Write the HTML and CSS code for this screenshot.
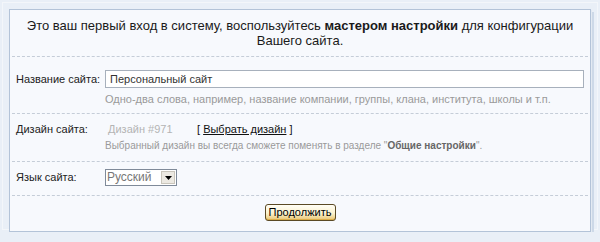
FILE: index.html
```html
<!DOCTYPE html>
<html lang="ru">
<head>
<meta charset="utf-8">
<title>Мастер настройки</title>
<link rel="stylesheet" href="styles.css">
</head>
<body>
<div class="page">
  <div class="panel">
    <div class="intro">Это ваш первый вход в систему, воспользуйтесь <b>мастером настройки</b> для конфигурации<br>Вашего сайта.</div>

    <div class="row row-name">
      <div class="label">Название сайта:</div>
      <div class="value">
        <input class="text-input" type="text" value="Персональный сайт">
        <div class="hint hint-name">Одно-два слова, например, название компании, группы, клана, института, школы и т.п.</div>
      </div>
    </div>

    <div class="row row-design">
      <div class="label">Дизайн сайта:</div>
      <div class="value">
        <div class="design-line"><span class="design-id">Дизайн #971</span><span class="choose">[ <a href="#">Выбрать дизайн</a> ]</span></div>
        <div class="hint">Выбранный дизайн вы всегда сможете поменять в разделе "<b>Общие настройки</b>".</div>
      </div>
    </div>

    <div class="row row-lang">
      <div class="label">Язык сайта:</div>
      <div class="value">
        <div class="select"><span class="select-text">Русский</span><span class="select-btn"><svg width="7" height="4" viewBox="0 0 7 4"><path d="M0 0h7L3.5 4z" fill="#000"/></svg></span></div>
      </div>
    </div>

    <div class="footer">
      <button class="btn" type="button">Продолжить</button>
    </div>
  </div>
</div>
</body>
</html>
```

FILE: styles.css
```css
html, body {
  margin: 0;
  padding: 0;
}
body {
  background: #e9eff7;
  font-family: "Liberation Sans", Arial, sans-serif;
  color: #222;
}
.page {
  margin: 2px;
  border: 1px solid #f3f6fa;
  padding: 6px 6px 6px 6px;
  height: 228px;
  box-sizing: border-box;
}
.panel {
  background: #f7f9fd;
  border: 1px solid #b3c3d8;
  box-shadow: 1px 1px 0 #e3eaf3, 3px 3px 0 #cdd9e8;
  padding: 0 2px;
  height: 223px;
  box-sizing: border-box;
}
.intro {
  text-align: center;
  font-size: 13px;
  line-height: 15px;
  padding: 8px 0 8px;
  border-bottom: 1px dashed #c5cdd8;
  color: #1a1a1a;
}
.intro b {
  font-weight: bold;
}
.row {
  display: grid;
  grid-template-columns: 89px 1fr;
  padding: 0 4px;
  border-bottom: 1px dashed #c5cdd8;
  font-size: 11px;
}
.label {
  color: #222;
  line-height: 14px;
}
.row-name {
  padding-top: 13px;
  padding-bottom: 7px;
}
.row-name .label {
  padding-top: 2px;
}
.text-input {
  display: block;
  width: 100%;
  box-sizing: border-box;
  height: 18px;
  margin: 0;
  border: 1px solid #a7b0bc;
  background: #fff;
  padding: 0 4px;
  font-family: "Liberation Sans", Arial, sans-serif;
  font-size: 11px;
  color: #333;
  outline: none;
}
.hint {
  font-size: 10px;
  line-height: 14px;
  color: #9a9a9a;
  margin-top: 4px;
}
.hint-name {
  font-size: 11px;
}
.hint b {
  color: #666;
}
.row-design {
  padding-top: 8px;
  padding-bottom: 8px;
}
.row-design .label {
  line-height: 15px;
}
.design-line {
  line-height: 15px;
  font-size: 11px;
}
.design-id {
  color: #b4b4b4;
  margin-left: 3px;
  display: inline-block;
  width: 89px;
}
.choose {
  color: #111;
}
.choose a {
  color: #111;
  text-decoration: underline;
}
.row-design .hint {
  margin-top: 2px;
}
.row-lang {
  padding-top: 7px;
  padding-bottom: 9px;
}
.row-lang .label {
  line-height: 17px;
}
.select {
  display: flex;
  width: 72px;
  height: 17px;
  box-sizing: border-box;
  border: 1px solid #7f8a99;
  background: #fff;
  align-items: stretch;
}
.select-text {
  flex: 1;
  font-size: 12px;
  line-height: 15px;
  color: #777;
  padding-left: 1px;
}
.select-btn {
  width: 14px;
  margin: 1px;
  background: #ece9e2;
  border: 1px solid #c9c5bb;
  box-sizing: border-box;
  display: flex;
  align-items: center;
  justify-content: center;
}
.footer {
  text-align: center;
  padding-top: 6px;
}
.btn {
  display: inline-block;
  height: 17px;
  width: 71px;
  padding: 0;
  margin: 0;
  font-family: "Liberation Sans", Arial, sans-serif;
  font-size: 11px;
  color: #000;
  border: 1px solid #5b4a25;
  border-radius: 3px;
  background: linear-gradient(#fffef6, #fbf2cf 55%, #e9c671);
  box-shadow: inset 0 -1px 0 #dcae4a;
  line-height: 14px;
}
```
